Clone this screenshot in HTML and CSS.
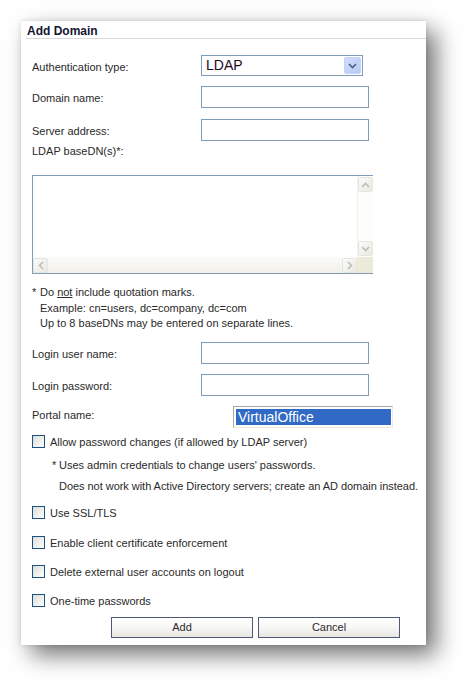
FILE: index.html
```html
<!DOCTYPE html>
<html>
<head>
<meta charset="utf-8">
<link rel="stylesheet" href="styles.css">
</head>
<body>
<div class="panel">
  <div class="title">Add Domain</div>
  <div class="form">
    <div class="row r-auth">
      <span class="label">Authentication type:</span>
      <div class="select">
        <span class="sel-text">LDAP</span>
        <span class="sel-btn"><svg width="9" height="6" viewBox="0 0 9 6"><path d="M1 1 L4.5 4.5 L8 1" fill="none" stroke="#4d6185" stroke-width="1.6"/></svg></span>
      </div>
    </div>
    <div class="row r-domain">
      <span class="label">Domain name:</span>
      <div class="input"></div>
    </div>
    <div class="row r-server">
      <span class="label">Server address:</span>
      <div class="input"></div>
    </div>
    <div class="ldap-label">LDAP baseDN(s)*:</div>
    <div class="textarea">
      <div class="ta-main">
        <div class="ta-body"></div>
        <div class="vscroll">
          <span class="sb-btn"><svg width="9" height="6" viewBox="0 0 9 6"><path d="M1 5 L4.5 1.5 L8 5" fill="none" stroke="#bdbdb6" stroke-width="1.6"/></svg></span>
          <span class="sb-btn"><svg width="9" height="6" viewBox="0 0 9 6"><path d="M1 1 L4.5 4.5 L8 1" fill="none" stroke="#bdbdb6" stroke-width="1.6"/></svg></span>
        </div>
      </div>
      <div class="ta-bottom">
        <div class="hscroll">
          <span class="sb-btn"><svg width="6" height="9" viewBox="0 0 6 9"><path d="M5 1 L1.5 4.5 L5 8" fill="none" stroke="#bdbdb6" stroke-width="1.6"/></svg></span>
          <span class="sb-btn"><svg width="6" height="9" viewBox="0 0 6 9"><path d="M1 1 L4.5 4.5 L1 8" fill="none" stroke="#bdbdb6" stroke-width="1.6"/></svg></span>
        </div>
        <div class="corner"></div>
      </div>
    </div>
    <div class="notes">
      <div><span class="ast">*</span>Do <u>not</u> include quotation marks.</div>
      <div class="indent">Example: cn=users, dc=company, dc=com</div>
      <div class="indent">Up to 8 baseDNs may be entered on separate lines.</div>
    </div>
    <div class="row r-luser">
      <span class="label">Login user name:</span>
      <div class="input"></div>
    </div>
    <div class="row r-lpw">
      <span class="label">Login password:</span>
      <div class="input"></div>
    </div>
    <div class="row r-portal">
      <span class="label portal-label">Portal name:</span>
      <div class="portal-box"><span class="portal-sel">VirtualOffice</span></div>
    </div>
    <div class="cb-row cb-allow"><span class="cb"></span><span>Allow password changes (if allowed by LDAP server)</span></div>
    <div class="subnote sn1"><span class="ast2">*</span>Uses admin credentials to change users' passwords.</div>
    <div class="subnote sn2">Does not work with Active Directory servers; create an AD domain instead.</div>
    <div class="cb-row cb-ssl"><span class="cb"></span><span>Use SSL/TLS</span></div>
    <div class="cb-row cb-enable"><span class="cb"></span><span>Enable client certificate enforcement</span></div>
    <div class="cb-row cb-delete"><span class="cb"></span><span>Delete external user accounts on logout</span></div>
    <div class="cb-row cb-otp"><span class="cb"></span><span>One-time passwords</span></div>
    <div class="buttons">
      <button class="btn">Add</button>
      <button class="btn">Cancel</button>
    </div>
  </div>
</div>
</body>
</html>
```

FILE: styles.css
```css
html, body {
  margin: 0;
  padding: 0;
  background: #ffffff;
}
body {
  width: 468px;
  height: 688px;
  overflow: hidden;
  font-family: "Liberation Sans", Arial, sans-serif;
  font-size: 11px;
  color: #2a2a2a;
}
.panel {
  margin: 21px 0 0 21px;
  width: 405px;
  height: 624px;
  background: #ffffff;
  box-shadow: 10px 10px 22px rgba(0, 0, 0, 0.55), 0 0 5px rgba(0, 0, 0, 0.12);
  display: flex;
  flex-direction: column;
}
.title {
  margin-left: 5px;
  height: 14px;
  padding-top: 3px;
  line-height: 14px;
  border-bottom: 1px solid #d8d8d8;
  font-weight: bold;
  font-size: 12px;
  color: #141432;
  padding-left: 1px;
}
.form {
  padding-left: 11px;
  display: flex;
  flex-direction: column;
}
.row {
  display: flex;
  align-items: center;
}
.label {
  width: 169px;
  flex: none;
  padding-top: 2px;
}
.r-auth { margin-top: 16px; height: 21px; }
.r-domain { margin-top: 10px; height: 22px; }
.r-server { margin-top: 11px; height: 22px; }
.r-luser { margin-top: 10px; height: 22px; }
.r-lpw { margin-top: 10px; height: 22px; }
.r-portal { margin-top: 10px; height: 22px; align-items: flex-start; }
.portal-label { padding-top: 2px; line-height: 14px; }

.select {
  box-sizing: border-box;
  width: 162px;
  height: 21px;
  border: 1px solid #7f9db9;
  display: flex;
  align-items: center;
  justify-content: space-between;
  padding: 1px;
  background: #fff;
}
.sel-text {
  font-size: 14px;
  color: #1a0a1a;
  padding-left: 3px;
  line-height: 17px;
}
.sel-btn {
  width: 17px;
  height: 17px;
  box-sizing: border-box;
  background: linear-gradient(135deg, #d2defb, #b6c9f5);
  border: 1px solid #c3d3fd;
  border-radius: 2px;
  display: flex;
  align-items: center;
  justify-content: center;
}
.input {
  box-sizing: border-box;
  width: 168px;
  height: 22px;
  border: 1px solid #7f9db9;
  background: #fff;
}
.ldap-label {
  margin-top: 3px;
  height: 14px;
  line-height: 14px;
}
.textarea {
  margin-top: 17px;
  width: 341px;
  height: 99px;
  box-sizing: border-box;
  border: 1px solid #7f9db9;
  border-right: none;
  display: flex;
  flex-direction: column;
}
.ta-main {
  flex: 1;
  display: flex;
}
.ta-body {
  flex: 1;
  background: #fff;
}
.vscroll {
  width: 16px;
  background: #fdfdfa;
  border-left: 1px solid #f3f1ea;
  display: flex;
  flex-direction: column;
  justify-content: space-between;
  padding: 1px 0;
  box-sizing: border-box;
}
.sb-btn {
  box-sizing: border-box;
  width: 15px;
  height: 15px;
  border: 1px solid #e6e6e0;
  border-radius: 2px;
  background: linear-gradient(135deg, #fbfbf9, #e9e8e2);
  display: flex;
  align-items: center;
  justify-content: center;
}
.ta-bottom {
  height: 16px;
  display: flex;
}
.hscroll {
  flex: 1;
  background: linear-gradient(#fbfbf8, #f1f0e9);
  display: flex;
  justify-content: space-between;
  align-items: center;
}
.corner {
  width: 16px;
  background: #ecead9;
}
.notes {
  margin-top: 11px;
  line-height: 15.5px;
}
.ast {
  display: inline-block;
  width: 8px;
}
.indent { padding-left: 8px; }
.portal-box {
  margin-left: 32px;
  box-sizing: border-box;
  width: 160px;
  height: 22px;
  border-top: 1px solid #a7a6aa;
  border-left: 1px solid #a7a6aa;
  border-right: 1px solid #efeadc;
  border-bottom: 1px solid #efeadc;
  padding: 2px 1px 2px 2px;
  background: #fff;
}
.portal-sel {
  display: block;
  height: 16px;
  line-height: 16px;
  background: #316ac5;
  color: #fff;
  font-size: 14px;
  padding-left: 2px;
}
.cb-row {
  display: flex;
  align-items: center;
  height: 18px;
}
.cb {
  box-sizing: border-box;
  width: 13px;
  height: 13px;
  border: 1px solid #1c5180;
  background: linear-gradient(135deg, #dcdcd7, #ffffff);
  margin-right: 5px;
  flex: none;
}
.cb-allow { margin-top: 5px; }
.subnote {
  padding-left: 20px;
  height: 14px;
  line-height: 14px;
}
.sn1 { margin-top: 7px; }
.sn2 { margin-top: 7px; padding-left: 27px; letter-spacing: -0.04px; }
.ast2 {
  display: inline-block;
  width: 7px;
}
.cb-ssl { margin-top: 11px; }
.cb-enable { margin-top: 12px; }
.cb-delete { margin-top: 11px; }
.cb-otp { margin-top: 11px; }
.buttons {
  margin-top: 7px;
  padding-left: 79px;
  display: flex;
  gap: 5px;
}
.btn {
  box-sizing: border-box;
  width: 142px;
  height: 21px;
  border: 1px solid #4f5a78;
  background: linear-gradient(#ffffff 0%, #f7f7f5 50%, #e6e5e0 100%);
  font-family: "Liberation Sans", Arial, sans-serif;
  font-size: 11px;
  color: #2a2a2a;
  padding: 0;
  border-radius: 0;
}
```
